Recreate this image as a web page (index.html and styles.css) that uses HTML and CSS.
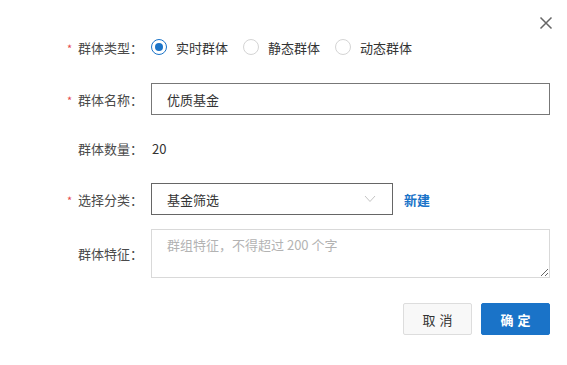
FILE: index.html
```html
<!DOCTYPE html>
<html lang="zh-CN">
<head>
  <meta charset="UTF-8" />
  <meta name="viewport" content="width=device-width, initial-scale=1.0"/>
  <title>新建群体</title>
  <link rel="stylesheet" href="styles.css">
</head>
<body>

  <div class="dialog">
    <button class="close" aria-label="关闭">
      <svg width="14" height="14" viewBox="0 0 14 14">
        <path d="M1.5 1.5 L12.5 12.5 M12.5 1.5 L1.5 12.5" stroke="#666" stroke-width="1.5" fill="none"/>
      </svg>
    </button>

    <div class="row row-type">
      <label class="label required">群体类型：</label>
      <div class="field radios">
        <span class="radio checked"><i></i>实时群体</span>
        <span class="radio"><i></i>静态群体</span>
        <span class="radio"><i></i>动态群体</span>
      </div>
    </div>

    <div class="row row-name">
      <label class="label required">群体名称：</label>
      <div class="field">
        <input class="input dark" type="text" value="优质基金"/>
      </div>
    </div>

    <div class="row row-count">
      <label class="label">群体数量：</label>
      <div class="field value">20</div>
    </div>

    <div class="row row-cat">
      <label class="label required">选择分类：</label>
      <div class="field">
        <div class="select">
          <span>基金筛选</span>
          <svg width="12" height="8" viewBox="0 0 12 8">
            <path d="M1 1 L6 6.5 L11 1" stroke="#c4c4c4" stroke-width="1" fill="none"/>
          </svg>
        </div>
        <a class="link">新建</a>
      </div>
    </div>

    <div class="row row-desc">
      <label class="label">群体特征：</label>
      <div class="field">
        <textarea class="textarea" placeholder="群组特征，不得超过 200 个字"></textarea>
      </div>
    </div>

    <div class="footer">
      <button class="btn">取消</button>
      <button class="btn primary">确定</button>
    </div>
  </div>

</body>
</html>
```

FILE: styles.css
```css
:root {
  --blue: #1a73c8;
  --text: #333;
  --label: #4a4a4a;
  --line: #d9d9d9;
}

body {
  margin: 0;
  background: #fff;
  font-family: "Noto Sans CJK SC", "Noto Sans", sans-serif;
  font-size: 13px;
  color: var(--text);
}

.dialog {
  position: relative;
  width: 567px;
  height: 365px;
  box-sizing: border-box;
  padding: 31px 17px 0 0;
}

.close {
  position: absolute;
  top: 16px;
  right: 14px;
  width: 14px;
  height: 14px;
  padding: 0;
  border: none;
  background: none;
  cursor: pointer;
  line-height: 0;
}

.row {
  display: flex;
  align-items: center;
  min-height: 32px;
}

.row-type { margin-bottom: 20px; }
.row-name { margin-bottom: 17px; }
.row-count { margin-bottom: 19px; }
.row-cat { margin-bottom: 14px; }
.row-desc { margin-bottom: 25px; }

.label {
  flex: 0 0 65px;
  margin-left: 78px;
  margin-right: 8px;
  color: var(--label);
  white-space: nowrap;
  position: relative;
}

.label.required::before {
  content: "*";
  position: absolute;
  left: -11px;
  top: 2px;
  color: #e5484d;
  font-size: 11px;
}

.field {
  flex: 1;
  display: flex;
  align-items: center;
}

.value {
  padding-left: 1px;
}

.radio {
  display: inline-flex;
  align-items: center;
  color: var(--text);
  margin-right: 15px;
}

.radio i {
  width: 14px;
  height: 14px;
  border: 1px solid #d4d4d4;
  border-radius: 50%;
  margin-right: 9px;
  box-sizing: content-box;
  position: relative;
}

.radio.checked i {
  border-color: var(--blue);
}

.radio.checked i::after {
  content: "";
  position: absolute;
  left: 3px;
  top: 3px;
  width: 8px;
  height: 8px;
  border-radius: 50%;
  background: var(--blue);
}

.input {
  width: 100%;
  height: 32px;
  box-sizing: border-box;
  padding: 0 15px;
  border: 1px solid #777;
  font-family: inherit;
  font-size: 13px;
  color: var(--text);
  outline: none;
}

.select {
  width: 242px;
  height: 32px;
  box-sizing: border-box;
  padding: 0 16px 0 15px;
  border: 1px solid #666;
  display: flex;
  align-items: center;
  justify-content: space-between;
}

.link {
  margin-left: 11px;
  color: var(--blue);
  font-weight: bold;
  cursor: pointer;
}

.textarea {
  width: 100%;
  height: 49px;
  box-sizing: border-box;
  padding: 5px 15px;
  border: 1px solid var(--line);
  font-family: inherit;
  font-size: 13px;
  color: var(--text);
  resize: vertical;
  outline: none;
}

.textarea::placeholder {
  color: #b3b3b3;
}

.footer {
  display: flex;
  justify-content: flex-end;
  gap: 9px;
}

.btn {
  width: 69px;
  height: 32px;
  border: 1px solid #ddd;
  border-radius: 2px;
  background: #f8f8f8;
  font-family: inherit;
  font-size: 13px;
  letter-spacing: 4px;
  text-indent: 4px;
  color: var(--text);
  cursor: pointer;
}

.btn.primary {
  background: var(--blue);
  border-color: var(--blue);
  color: #fff;
  font-weight: bold;
}
```
